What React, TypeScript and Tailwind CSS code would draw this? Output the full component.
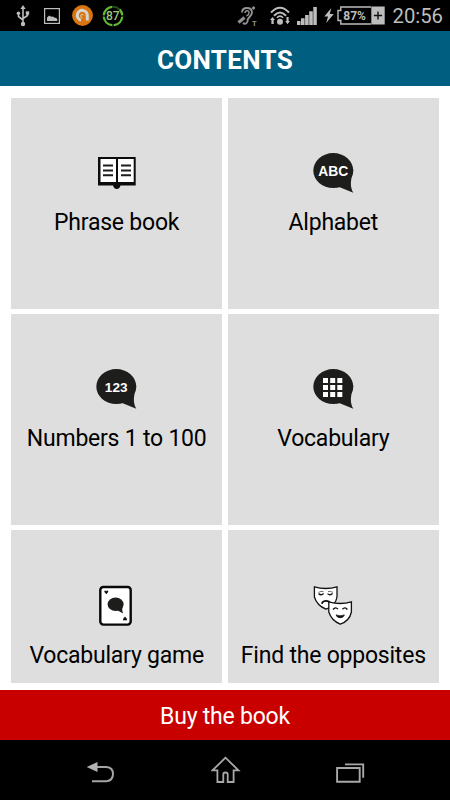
import React from 'react';

interface Tile {
  label: string;
  icon: React.ReactNode;
}

const Bubble = ({ children }: { children?: React.ReactNode }) => (
  <svg width="49" height="48" viewBox="0 0 49 48">
    <ellipse cx="24.3" cy="22.6" rx="20" ry="17.5" fill="#1d1d1b" />
    <path d="M42.5 30 Q40.5 38.5 44.3 44.8 L29.5 38.8Z" fill="#1d1d1b" />
    {children}
  </svg>
);

const BubbleText = ({ text, size }: { text: string; size: number }) => (
  <Bubble>
    <text
      x="24.2"
      y="28"
      textAnchor="middle"
      fontSize={size}
      fontWeight="700"
      fill="#fff"
      className="font-['Liberation_Sans',sans-serif]"
    >
      {text}
    </text>
  </Bubble>
);

const BookIcon = () => (
  <svg width="49" height="48" viewBox="0 0 49 48">
    <path d="M6 9H43.7V37.5H28.5Q27.5 41 24.8 41T21 37.5H6Z" fill="#0c0c0c" />
    <path d="M8.5 11H24V34H8.5ZM26 11H41.7V34H26Z" fill="#fff" />
    <path
      d="M11 17.5H21M11 22.4H21M11 27.3H21M29 17.5H39M29 22.4H39M29 27.3H39"
      stroke="#1d1d1b"
      strokeWidth="2"
    />
  </svg>
);

const GridIcon = () => (
  <Bubble>
    {[14, 21.2, 28.3].map((x) =>
      [14, 21, 28].map((y) => (
        <rect key={`${x}-${y}`} x={x} y={y} width="5" height="5" fill="#fff" />
      ))
    )}
  </Bubble>
);

const CardIcon = () => (
  <svg width="49" height="48" viewBox="0 0 49 48">
    <rect x="8.3" y="7" width="30.4" height="37.6" rx="3" fill="#fff" stroke="#080808" strokeWidth="2.4" />
    <ellipse cx="23.6" cy="24.3" rx="8" ry="6.8" fill="#1d1d1b" />
    <path d="M30.5 27Q29.6 30.5 31 33.4L25 30Z" fill="#1d1d1b" />
    <path d="M14.3 14.3L12.4 12Q12.2 10.5 13.4 10.6L14.3 11.2L15.2 10.6Q16.5 10.5 16.2 12Z" fill="#111" />
    <path d="M33 36.6L35 39Q35.2 40.6 33.9 40.5L33 39.9L32.1 40.5Q30.8 40.6 31 39Z" fill="#111" />
  </svg>
);

const MasksIcon = () => (
  <svg width="49" height="48" viewBox="0 0 49 48" fill="none" stroke="#111" strokeWidth="1.3">
    <path d="M5.4 6.8Q16.7 10.2 28 6.8V17Q26.5 26 17 29.2Q8 25.5 5.4 17Z" fill="#fff" />
    <path d="M9.5 12.4Q12 10.8 14.5 11.6M19 11.6Q21.5 10.8 24 12.4" strokeWidth="0.6" />
    <path d="M9.5 13.5Q12 16 14.6 13.6M18.5 13.6Q21 16 23.6 13.5" />
    <path d="M12.8 23.8Q13.6 20.8 17 20.8T21 23.2" strokeWidth="1.8" />
    <path d="M19.8 21.8Q31 25.2 42.4 21.8V32Q40.5 41 31.2 44.2Q22.5 40.5 19.8 32Z" fill="#fff" />
    <path d="M24 29.5Q26.5 26.3 29 29.2M33.4 29.2Q36 26.3 38.4 29.5" />
    <path d="M27 34.9Q31 36.8 35.4 34.9Q34.4 37.7 31.2 37.7T27 34.9Z" fill="#111" strokeWidth="0.8" />
  </svg>
);

const tiles: Tile[] = [
  { label: 'Phrase book', icon: <BookIcon /> },
  { label: 'Alphabet', icon: <BubbleText text="ABC" size={13.8} /> },
  { label: 'Numbers 1 to 100', icon: <BubbleText text="123" size={13.6} /> },
  { label: 'Vocabulary', icon: <GridIcon /> },
  { label: 'Vocabulary game', icon: <CardIcon /> },
  { label: 'Find the opposites', icon: <MasksIcon /> },
];

const StatusBar = () => (
  <div className="flex h-[31px] shrink-0 items-center bg-black pl-4 pr-[7px] text-[#bdbdbd]">
    {/* USB */}
    <svg width="14" height="22" viewBox="0 0 14 22" fill="none" stroke="currentColor" strokeWidth="1.6">
      <path d="M7 3V19M2.5 8V11.5L7 15M11.5 8V10.5L7 13.5" />
      <path d="M7 0L9.6 4H4.4Z" fill="currentColor" stroke="none" />
      <circle cx="7" cy="19" r="2.2" fill="currentColor" stroke="none" />
      <circle cx="2.4" cy="8.2" r="1.7" fill="currentColor" stroke="none" />
      <path d="M9.8 6.3H13.2V9.7H9.8Z" fill="currentColor" stroke="none" />
    </svg>
    {/* Screenshot */}
    <svg className="ml-[14px]" width="16" height="16" viewBox="0 0 16 16">
      <rect x="0.6" y="0.6" width="14.8" height="14.8" fill="none" stroke="currentColor" strokeWidth="1.2" />
      <path d="M3 13V9.6L5.2 7.5L7.2 8.7L9 8.4L10.5 9.8H12L13.3 11.3V13Z" fill="currentColor" />
    </svg>
    {/* Antivirus */}
    <svg className="ml-3" width="21" height="21" viewBox="0 0 21 21">
      <circle cx="10.5" cy="10.5" r="10.4" fill="#d87510" />
      <path d="M9 15.2A5 5 0 1 1 15.3 10.4V15.6" fill="none" stroke="#d8d4ce" strokeWidth="3" />
      <path d="M10.4 12.6A1.6 1.6 0 1 1 11.8 10.4" fill="none" stroke="#d8d4ce" strokeWidth="1" />
    </svg>
    {/* Battery ring */}
    <svg className="ml-[9px]" width="22" height="22" viewBox="0 0 22 22">
      <circle cx="11" cy="11" r="9.3" fill="none" stroke="#21501a" strokeWidth="2" />
      <path
        d="M12 20.2A9.3 9.3 0 0 0 20.2 12M20.2 10A9.3 9.3 0 0 0 17.8 4.5M10 20.2A9.3 9.3 0 0 1 1.8 12M1.8 10A9.3 9.3 0 0 1 10 1.8"
        fill="none"
        stroke="#65ba35"
        strokeWidth="2.2"
      />
      <text x="10.8" y="15.2" textAnchor="middle" fontSize="12" fontWeight="500" fill="#9cc982" className="font-[Roboto,sans-serif]">
        87
      </text>
    </svg>

    <div className="ml-auto flex items-center">
      {/* Hearing / TTY */}
      <svg width="22" height="22" viewBox="0 0 22 22" fill="none" stroke="#929292" strokeWidth="1.9">
        <path d="M5 7.5Q5.2 3 10 3T15 7.5Q15 9.5 12.5 12T10.5 16.5Q9 20 5.8 18.2" />
        <path d="M8 8Q8.2 5.8 10.2 5.8T12 8Q12 10 9.5 11" strokeWidth="1.4" />
        <path d="M1.5 17.5L7.5 12.5" strokeWidth="3.2" />
        <path d="M15.5 4L17.5 2" strokeWidth="2.6" />
        <text x="15" y="21" fontSize="7.5" fontWeight="700" fill="#929292" stroke="none" className="font-[Roboto,sans-serif]">
          T
        </text>
      </svg>
      {/* Wifi */}
      <svg className="ml-[11px]" width="20" height="20" viewBox="0 0 20 20" fill="none" stroke="currentColor" strokeWidth="2">
        <path d="M1 6.5Q10 -3.1 19 6.5M4 9.8Q10 3.3 16 9.8" />
        <path d="M7 11.7Q10 8.4 13 11.7" strokeWidth="1.7" />
        <circle cx="10" cy="15.8" r="3" fill="currentColor" stroke="none" />
        <path d="M2.5 11L5 14H3.7V18H1.4V14H0ZM17.5 18.3L15.2 15H16.5V11H18.6V15H20Z" fill="currentColor" stroke="none" />
      </svg>
      {/* Signal */}
      <svg className="ml-[7px]" width="20" height="18" viewBox="0 0 20 18" fill="currentColor">
        <path d="M0 14H3.5V18H0ZM4 11.3H7.6V18H4ZM8.1 8H11.7V18H8.1ZM12.2 4.2H15.8V18H12.2ZM16.3 0H19.8V18H16.3Z" />
      </svg>
      {/* Charging */}
      <svg className="ml-[7px]" width="10" height="15" viewBox="0 0 10 15" fill="currentColor">
        <path d="M7.3 0L0.3 8.5H4L2.2 15L9.8 6H5.8Z" />
      </svg>
      <svg className="ml-[3px]" width="48" height="19" viewBox="0 0 48 19">
        <path d="M34 1H3.8V4.5H1V14.5H3.8V18H34" fill="none" stroke="currentColor" strokeWidth="1.4" />
        <rect x="34.3" y="0.5" width="13.4" height="18" fill="currentColor" />
        <path d="M41 5.4V13.6M36.9 9.5H45.1" stroke="#111" strokeWidth="1.4" />
        <text x="17.6" y="13.8" textAnchor="middle" fontSize="12" fontWeight="700" fill="currentColor" className="font-[Roboto,sans-serif]">
          87%
        </text>
      </svg>
      <span className="ml-[7px] pt-px text-[20.3px] leading-none">20:56</span>
    </div>
  </div>
);

const NavBar = () => (
  <div className="flex h-[60px] shrink-0 items-center justify-between bg-black pl-[86px] pr-[85px]">
    <svg width="29" height="30" viewBox="0 0 29 30">
      <path d="M11 12H20.5Q27 12.6 27 19T20.5 26.3H6" fill="none" stroke="#a5a5a5" strokeWidth="2" />
      <path d="M0.7 12L11.5 7V17Z" fill="#b2b2b2" />
    </svg>
    <svg width="30" height="30" viewBox="0.5 0 30 30" fill="none" stroke="#a8a8a8" strokeWidth="1.8">
      <path d="M15 2.7L2 15.4H6.9V27H12.8V19.4Q12.8 17.5 15 17.5T17.2 19.4V27H23.1V15.4H28Z" />
    </svg>
    <svg width="29" height="30" viewBox="0 0 29 30" fill="none" stroke="#a8a8a8" strokeWidth="1.9">
      <path d="M1.1 13H23.7V26.7H1.1ZM9 9.4H27.2V22.7" />
    </svg>
  </div>
);

export default function App() {
  return (
    <div className="flex h-[800px] w-[450px] flex-col overflow-hidden bg-white font-[Roboto,sans-serif]">
      <StatusBar />
      <header className="flex h-[55px] shrink-0 items-center justify-center bg-[#005f80] pt-[3px] text-[26px] font-bold tracking-[0.3px] text-white">
        CONTENTS
      </header>

      <main className="h-[603.5px] shrink-0 px-[11px] pt-[11.5px] pb-[6.5px]">
        <div className="grid h-full auto-rows-[211px] grid-cols-2 gap-[5.3px] overflow-hidden">
          {tiles.map((tile) => (
            <button key={tile.label} className="flex flex-col items-center bg-[#dedede] pt-[50px] text-black">
              {tile.icon}
              <span className="mt-[12.5px] whitespace-nowrap text-[23px] leading-[30px] tracking-[-0.22px]">
                {tile.label}
              </span>
            </button>
          ))}
        </div>
      </main>

      <button className="h-[50.5px] shrink-0 bg-[#c80000] pt-[4px] text-[23px] tracking-[-0.22px] text-white">
        Buy the book
      </button>
      <NavBar />
    </div>
  );
}
